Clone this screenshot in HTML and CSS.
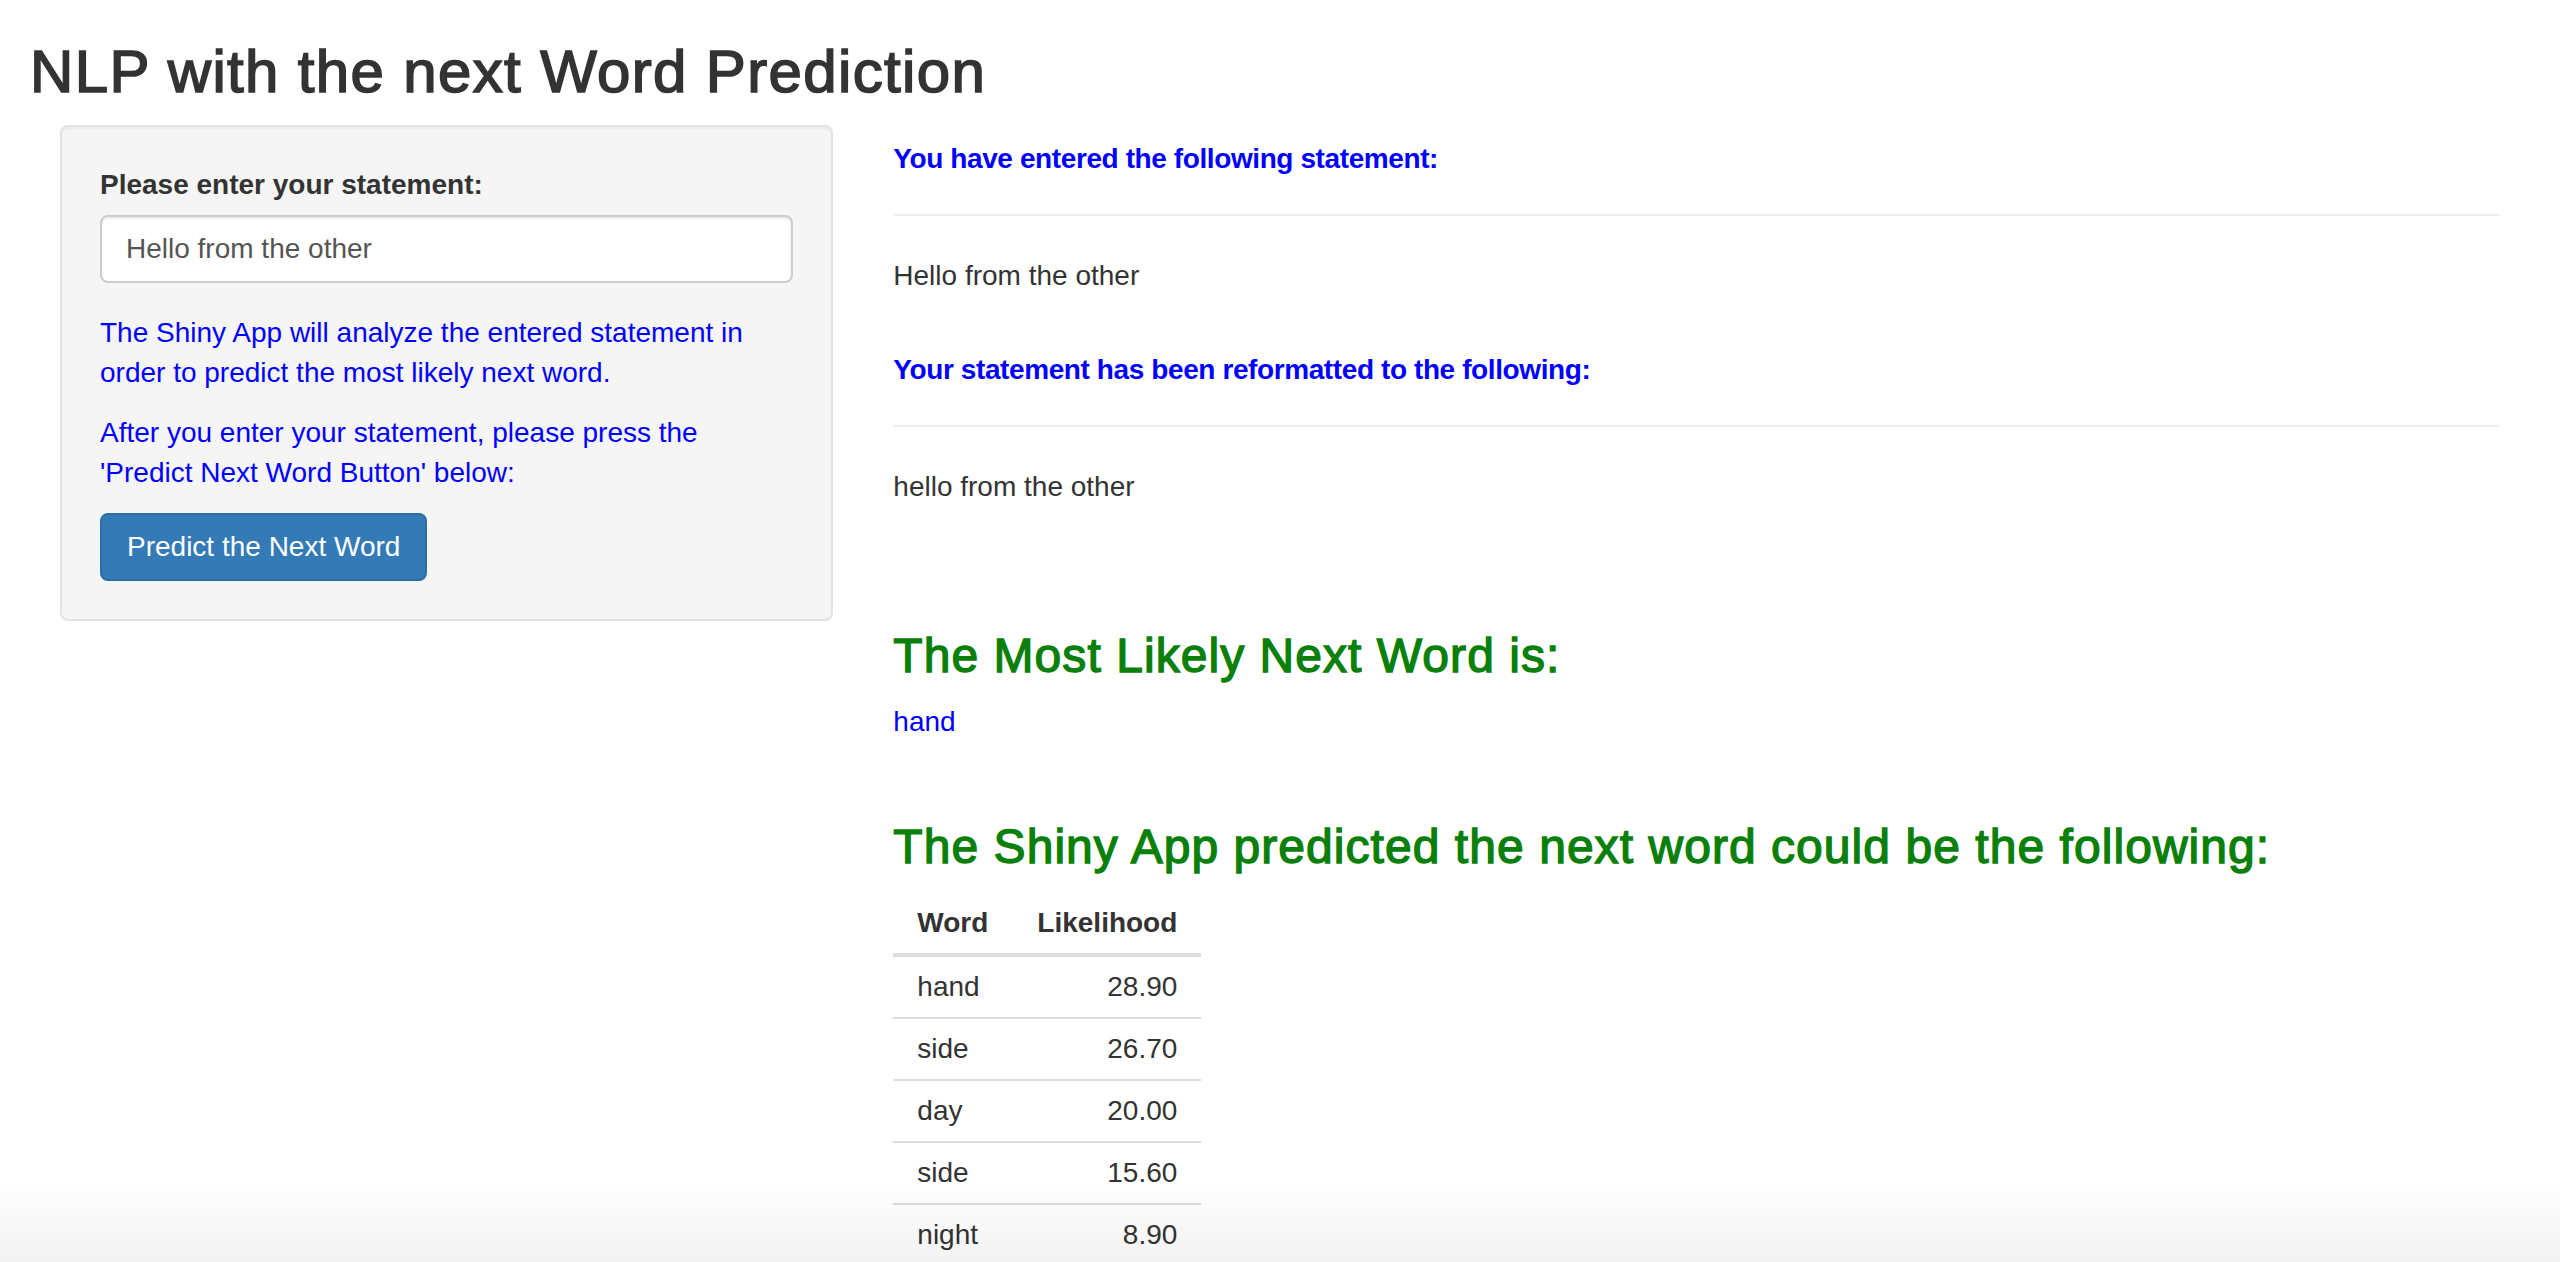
FILE: index.html
```html
<!DOCTYPE html>
<html lang="en">
<head>
<meta charset="utf-8">
<title>NLP with the next Word Prediction</title>
<link rel="stylesheet" href="styles.css">
</head>
<body>
<div class="page">
  <h2 class="title">NLP with the next Word Prediction</h2>
  <div class="layout">
    <div class="sidebar">
      <form class="well">
        <div class="form-group">
          <label class="label" for="statement">Please enter your statement:</label>
          <input class="input" id="statement" type="text" value="Hello from the other">
        </div>
        <p class="help">The Shiny App will analyze the entered statement in order to predict the most likely next word.</p>
        <p class="help">After you enter your statement, please press the 'Predict Next Word Button' below:</p>
        <button class="btn" type="button">Predict the Next Word</button>
      </form>
    </div>
    <div class="main">
      <h5 class="out-heading">You have entered the following statement:</h5>
      <hr class="rule">
      <div class="out-text">Hello from the other</div>
      <h5 class="out-heading out-heading--spaced">Your statement has been reformatted to the following:</h5>
      <hr class="rule">
      <div class="out-text">hello from the other</div>
      <h3 class="result-heading result-heading--first">The Most Likely Next Word is:</h3>
      <div class="next-word">hand</div>
      <h3 class="result-heading result-heading--second">The Shiny App predicted the next word could be the following:</h3>
      <table class="pred-table">
        <thead>
          <tr><th class="col-word">Word</th><th class="col-like">Likelihood</th></tr>
        </thead>
        <tbody>
          <tr><td class="col-word">hand</td><td class="col-like">28.90</td></tr>
          <tr><td class="col-word">side</td><td class="col-like">26.70</td></tr>
          <tr><td class="col-word">day</td><td class="col-like">20.00</td></tr>
          <tr><td class="col-word">side</td><td class="col-like">15.60</td></tr>
          <tr><td class="col-word">night</td><td class="col-like">8.90</td></tr>
        </tbody>
      </table>
    </div>
  </div>
</div>
<div class="window-fade"></div>
</body>
</html>
```

FILE: styles.css
```css
html, body {
  margin: 0;
  padding: 0;
}

body {
  font-family: "Liberation Sans", Arial, Helvetica, sans-serif;
  font-size: 28px;
  line-height: 40px;
  color: #333;
  background: #fff;
}

.page {
  padding: 0 30px;
}

.title {
  margin: 39px 0 20px;
  font-size: 60px;
  line-height: 66px;
  font-weight: normal;
  -webkit-text-stroke: 1.6px #333;
  letter-spacing: 1.35px;
  color: #333;
}

.layout {
  display: flex;
  align-items: flex-start;
}

.sidebar {
  width: 33.3333%;
  padding: 0 30px;
  box-sizing: border-box;
}

.main {
  width: 66.6667%;
  padding: 0 30px;
  box-sizing: border-box;
}

.well {
  background: #f5f5f5;
  border: 2px solid #e3e3e3;
  border-radius: 8px;
  padding: 38px;
  margin: 0 0 40px;
  box-shadow: inset 0 2px 2px rgba(0, 0, 0, 0.05);
}

.form-group {
  margin-bottom: 30px;
}

.label {
  display: block;
  font-weight: bold;
  margin-bottom: 10px;
  line-height: 40px;
}

.input {
  display: block;
  width: 100%;
  height: 68px;
  box-sizing: border-box;
  padding: 12px 24px;
  font-family: inherit;
  font-size: 28px;
  line-height: 40px;
  color: #555;
  background: #fff;
  border: 2px solid #ccc;
  border-radius: 8px;
  box-shadow: inset 0 2px 2px rgba(0, 0, 0, 0.075);
  outline: none;
}

.help {
  margin: 0 0 20px;
  color: #0000ff;
}

.btn {
  display: inline-block;
  margin: 0;
  padding: 12px 25px;
  font-family: inherit;
  font-size: 28px;
  line-height: 40px;
  color: #fff;
  background: #337ab7;
  border: 2px solid #2e6da4;
  border-radius: 8px;
  cursor: pointer;
}

.out-heading {
  margin: 19px 0 20px;
  font-size: 28px;
  line-height: 30px;
  font-weight: bold;
  letter-spacing: -0.4px;
  color: #0000ff;
}

.out-heading--spaced {
  margin-top: 59px;
}

.rule {
  margin: 40px 0;
  border: 0;
  border-top: 2px solid #eee;
  height: 0;
}

.out-text {
  line-height: 40px;
}

.result-heading {
  margin: 0 0 20px;
  font-size: 48px;
  line-height: 53px;
  font-weight: normal;
  color: #0a800a;
  -webkit-text-stroke: 1.4px #0a800a;
  letter-spacing: 1.05px;
}

.result-heading--first {
  margin-top: 122px;
}

.result-heading--second {
  margin-top: 78px;
}

.next-word {
  color: #0000ff;
}

.pred-table {
  border-collapse: collapse;
  border-spacing: 0;
  margin-bottom: 40px;
}

.pred-table th,
.pred-table td {
  padding: 10px 16px;
  line-height: 40px;
  vertical-align: top;
}

.pred-table th {
  font-weight: bold;
  border-bottom: 4px solid #ddd;
}

.pred-table td {
  border-top: 2px solid #ddd;
}

.pred-table .col-word {
  padding-left: 24px;
  width: 88px;
  text-align: left;
}

.pred-table .col-like {
  padding-right: 24px;
  text-align: right;
}

.window-fade {
  position: fixed;
  left: 0;
  right: 0;
  bottom: 0;
  height: 80px;
  pointer-events: none;
  background: linear-gradient(to bottom, rgba(0, 0, 0, 0), rgba(0, 0, 0, 0.05));
}
```
